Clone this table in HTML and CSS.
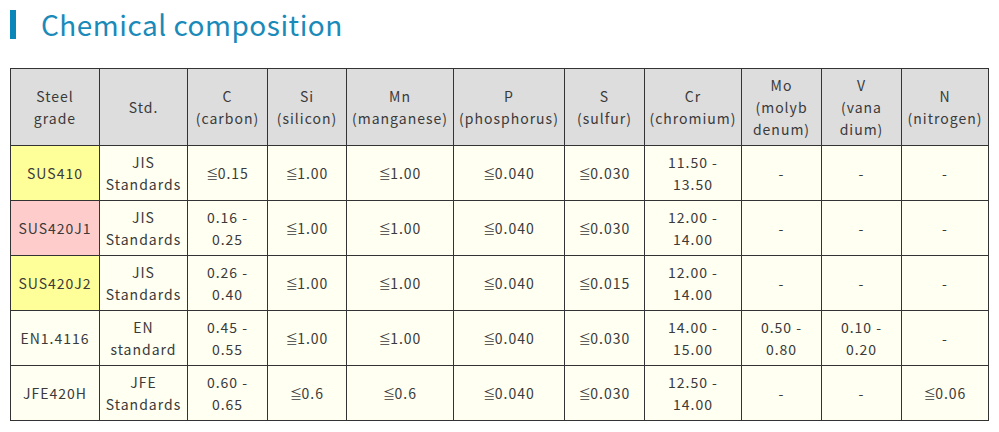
FILE: index.html
```html
<!DOCTYPE html>
<html>
<head>
<meta charset="utf-8">
<link rel="stylesheet" href="styles.css">
</head>
<body>
<div class="page">
  <h2 class="title">Chemical composition</h2>
  <table class="chem">
    <colgroup>
      <col class="c1"><col class="c2"><col class="c3"><col class="c4"><col class="c5"><col class="c6"><col class="c7"><col class="c8"><col class="c9"><col class="c10"><col class="c11">
    </colgroup>
    <thead>
      <tr>
        <th>Steel<br>grade</th>
        <th>Std.</th>
        <th>C<br>(carbon)</th>
        <th>Si<br>(silicon)</th>
        <th>Mn<br>(manganese)</th>
        <th>P<br>(phosphorus)</th>
        <th>S<br>(sulfur)</th>
        <th>Cr<br>(chromium)</th>
        <th>Mo<br>(molyb<br>denum)</th>
        <th>V<br>(vana<br>dium)</th>
        <th>N<br>(nitrogen)</th>
      </tr>
    </thead>
    <tbody>
      <tr>
        <td class="yellow">SUS410</td>
        <td>JIS<br>Standards</td>
        <td><span class="le">≦</span>0.15</td>
        <td><span class="le">≦</span>1.00</td>
        <td><span class="le">≦</span>1.00</td>
        <td><span class="le">≦</span>0.040</td>
        <td><span class="le">≦</span>0.030</td>
        <td>11.50 -<br>13.50</td>
        <td>-</td>
        <td>-</td>
        <td>-</td>
      </tr>
      <tr>
        <td class="pink">SUS420J1</td>
        <td>JIS<br>Standards</td>
        <td>0.16 -<br>0.25</td>
        <td><span class="le">≦</span>1.00</td>
        <td><span class="le">≦</span>1.00</td>
        <td><span class="le">≦</span>0.040</td>
        <td><span class="le">≦</span>0.030</td>
        <td>12.00 -<br>14.00</td>
        <td>-</td>
        <td>-</td>
        <td>-</td>
      </tr>
      <tr>
        <td class="yellow">SUS420J2</td>
        <td>JIS<br>Standards</td>
        <td>0.26 -<br>0.40</td>
        <td><span class="le">≦</span>1.00</td>
        <td><span class="le">≦</span>1.00</td>
        <td><span class="le">≦</span>0.040</td>
        <td><span class="le">≦</span>0.015</td>
        <td>12.00 -<br>14.00</td>
        <td>-</td>
        <td>-</td>
        <td>-</td>
      </tr>
      <tr>
        <td>EN1.4116</td>
        <td>EN<br>standard</td>
        <td>0.45 -<br>0.55</td>
        <td><span class="le">≦</span>1.00</td>
        <td><span class="le">≦</span>1.00</td>
        <td><span class="le">≦</span>0.040</td>
        <td><span class="le">≦</span>0.030</td>
        <td>14.00 -<br>15.00</td>
        <td>0.50 -<br>0.80</td>
        <td>0.10 -<br>0.20</td>
        <td>-</td>
      </tr>
      <tr>
        <td>JFE420H</td>
        <td>JFE<br>Standards</td>
        <td>0.60 -<br>0.65</td>
        <td><span class="le">≦</span>0.6</td>
        <td><span class="le">≦</span>0.6</td>
        <td><span class="le">≦</span>0.040</td>
        <td><span class="le">≦</span>0.030</td>
        <td>12.50 -<br>14.00</td>
        <td>-</td>
        <td>-</td>
        <td><span class="le">≦</span>0.06</td>
      </tr>
    </tbody>
  </table>
</div>
</body>
</html>
```
FILE: styles.css
```css
* { box-sizing: border-box; }
html, body { margin: 0; padding: 0; background: #fff; }
body {
  font-family: "Noto Sans CJK JP", "Noto Sans", sans-serif;
  color: #3a3a3a;
}
.page { padding: 10px 10px 0 10px; }
.title {
  margin: 0;
  height: 29px;
  border-left: 6px solid #0a87b8;
  padding-left: 25px;
  font-size: 28px;
  font-weight: 400;
  line-height: 29px;
  color: #1a8ab9;
  letter-spacing: 0.5px;
}
.chem {
  margin-top: 29px;
  border-collapse: collapse;
  table-layout: fixed;
  width: 979px;
  font-size: 14px;
  letter-spacing: 1px;
}
.chem th, .chem td {
  border: 1px solid #333;
  text-align: center;
  vertical-align: middle;
  padding: 5px 0;
  line-height: 22px;
  font-weight: 400;
}
.chem th { background: #dddddd; height: 77px; }
.chem td { background: #fffff2; height: 55px; }
.chem td.yellow { background: #ffff99; }
.chem td.pink { background: #ffcccc; }
.le { font-size: 12px; letter-spacing: -0.5px; }
.c1 { width: 89px; }
.c2 { width: 88px; }
.c3 { width: 80px; }
.c4 { width: 79px; }
.c5 { width: 107px; }
.c6 { width: 111px; }
.c7 { width: 80px; }
.c8 { width: 97px; }
.c9 { width: 80px; }
.c10 { width: 80px; }
.c11 { width: 87px; }
```
